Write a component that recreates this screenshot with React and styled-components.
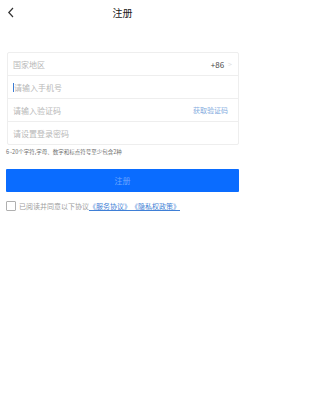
import React from 'react'
import styled, { createGlobalStyle } from 'styled-components'

const GlobalStyle = createGlobalStyle`
  html, body {
    margin: 0;
    padding: 0;
    background: #fff;
    font-family: "Noto Sans CJK SC", "Noto Sans", sans-serif;
  }
`

const Page = styled.div`
  width: 245px;
  height: 420px;
  background: #fff;
  display: flex;
  flex-direction: column;
`

const Header = styled.div`
  height: 25px;
  display: flex;
  align-items: center;
  justify-content: center;
  position: relative;
`

const BackButton = styled.div`
  position: absolute;
  left: 7px;
  top: 7px;
  width: 8px;
  height: 11px;
  display: flex;
`

const Title = styled.div`
  font-size: 10px;
  color: #222;
`

const Content = styled.div`
  padding: 27px 6px 0 7px;
  display: flex;
  flex-direction: column;
`

const Card = styled.div`
  border: 1px solid #eeeeee;
  border-radius: 2px;
  display: flex;
  flex-direction: column;
`

const Row = styled.div`
  height: 22px;
  display: flex;
  align-items: center;
  padding: 0 6px 0 5px;
  border-top: ${(p) => (p.$first ? 'none' : '1px solid #eeeeee')};
`

const Placeholder = styled.div`
  flex: 1;
  font-size: 8px;
  color: #b8b8b8;
  display: flex;
  align-items: center;
`

const Caret = styled.span`
  display: inline-block;
  width: 1px;
  height: 9px;
  background: #3a7bd5;
`

const Code = styled.div`
  font-size: 7px;
  color: #86ade0;
  margin-right: 4px;
`

const Prefix = styled.div`
  font-size: 8px;
  color: #444;
  display: flex;
  align-items: center;
  gap: 4px;
`

const Arrow = styled.span`
  color: #e0e0e0;
  font-size: 7px;
`

const Hint = styled.div`
  font-size: 5.5px;
  color: #707070;
  margin-top: 3px;
  margin-left: -1px;
  line-height: 8px;
`

const SubmitButton = styled.div`
  margin-top: 13px;
  height: 23px;
  background: #0a6cff;
  border-radius: 1px;
  color: #6ea6ff;
  font-size: 8px;
  display: flex;
  align-items: center;
  justify-content: center;
  margin-left: -1px;
`

const Agree = styled.div`
  margin-top: 9px;
  display: flex;
  align-items: center;
  font-size: 7px;
  color: #a0a0a0;
  margin-left: -1px;
`

const Box = styled.span`
  width: 8px;
  height: 8px;
  border: 1px solid #b0b0b0;
  border-radius: 1px;
  margin-right: 3px;
`

const Link = styled.span`
  color: #3f7fd6;
  text-decoration: underline;
  text-underline-offset: 1px;
`

export default function App() {
  return (
    <Page>
      <GlobalStyle />
      <Header>
        <BackButton>
          <svg width="8" height="11" viewBox="0 0 8 11">
            <path d="M6 1 L1.8 5.5 L6 10" stroke="#333" strokeWidth="1.2" fill="none" />
          </svg>
        </BackButton>
        <Title>注册</Title>
      </Header>
      <Content>
        <Card>
          <Row $first>
            <Placeholder>国家地区</Placeholder>
            <Prefix>
              +86<Arrow>&gt;</Arrow>
            </Prefix>
          </Row>
          <Row>
            <Placeholder>
              <Caret />
              请输入手机号
            </Placeholder>
          </Row>
          <Row>
            <Placeholder>请输入验证码</Placeholder>
            <Code>获取验证码</Code>
          </Row>
          <Row>
            <Placeholder>请设置登录密码</Placeholder>
          </Row>
        </Card>
        <Hint>6~20个字符,字母、数字和标点符号至少包含2种</Hint>
        <SubmitButton>注册</SubmitButton>
        <Agree>
          <Box />
          已阅读并同意以下协议<Link>《服务协议》</Link>
          <Link>《隐私权政策》</Link>
        </Agree>
      </Content>
    </Page>
  )
}
